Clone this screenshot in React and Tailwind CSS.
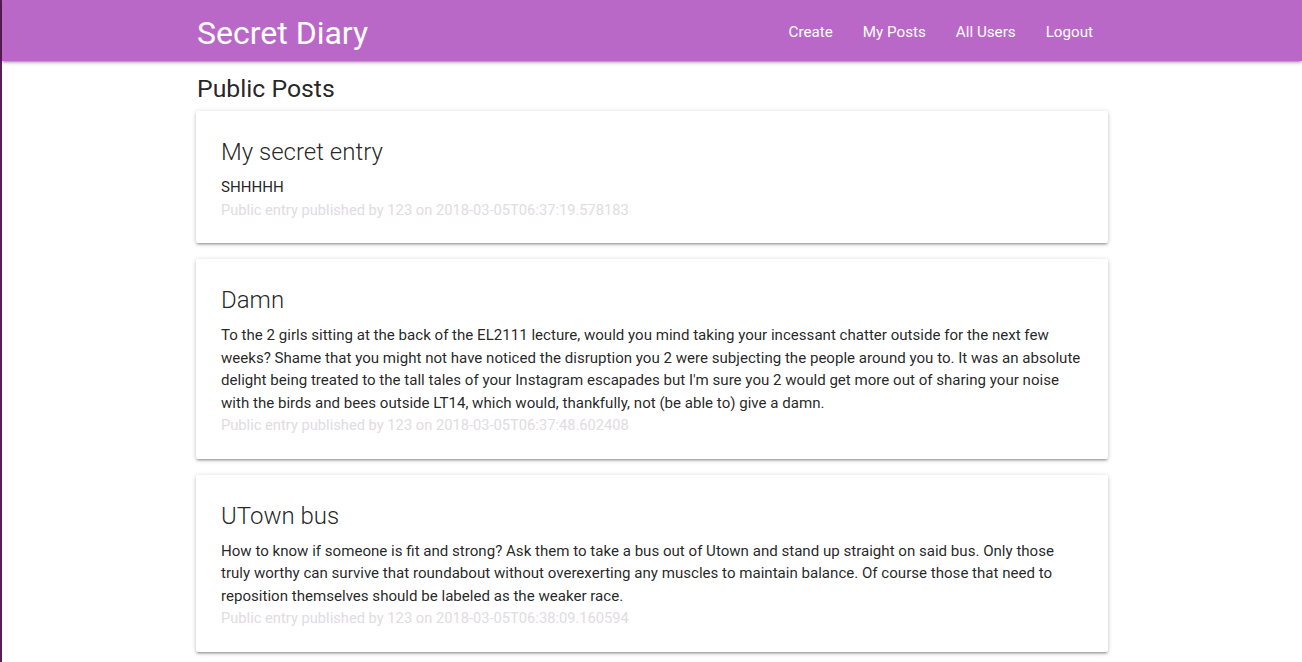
import React from "react";

const posts = [
  {
    title: "My secret entry",
    body: "SHHHHH",
    meta: "Public entry published by 123 on 2018-03-05T06:37:19.578183",
  },
  {
    title: "Damn",
    body: "To the 2 girls sitting at the back of the EL2111 lecture, would you mind taking your incessant chatter outside for the next few weeks? Shame that you might not have noticed the disruption you 2 were subjecting the people around you to. It was an absolute delight being treated to the tall tales of your Instagram escapades but I'm sure you 2 would get more out of sharing your noise with the birds and bees outside LT14, which would, thankfully, not (be able to) give a damn.",
    meta: "Public entry published by 123 on 2018-03-05T06:37:48.602408",
  },
  {
    title: "UTown bus",
    body: "How to know if someone is fit and strong? Ask them to take a bus out of Utown and stand up straight on said bus. Only those truly worthy can survive that roundabout without overexerting any muscles to maintain balance. Of course those that need to reposition themselves should be labeled as the weaker race.",
    meta: "Public entry published by 123 on 2018-03-05T06:38:09.160594",
  },
];

export default function App() {
  return (
    <div
      className="flex h-screen overflow-hidden bg-white text-[15.08px] leading-[22.5px] text-black/[0.87]"
      style={{ fontFamily: "Roboto, 'Noto Sans', sans-serif" }}
    >
      <div className="w-[2px] shrink-0 bg-[#5a1d5a]" />
      <div className="flex-1 min-w-0">
        <nav className="relative z-10 h-[61px] bg-[#ba68c8] pt-[4px] shadow-[0_2px_2px_0_rgba(0,0,0,0.14),0_3px_1px_-2px_rgba(0,0,0,0.12),0_1px_5px_0_rgba(0,0,0,0.2)]">
          <div className="mx-auto flex h-full w-[912px] items-center justify-between">
            <a className="pl-px text-[32px] leading-none text-white">Secret Diary</a>
            <ul className="flex items-center text-[15.2px] text-white">
              <li className="px-[15px]">Create</li>
              <li className="px-[15px]">My Posts</li>
              <li className="px-[15px]">All Users</li>
              <li className="px-[15px]">Logout</li>
            </ul>
          </div>
        </nav>
        <main className="mx-auto w-[912px]">
          <h5 className="mt-[14px] mb-[9px] pl-px text-[24.8px] leading-[27px] font-normal">
            Public Posts
          </h5>
          <div className="flex flex-col gap-[16px]">
            {posts.map((p) => (
              <div
                key={p.title}
                className="rounded-[2px] bg-white pt-[25px] pb-[22px] pl-[25px] pr-[24px] shadow-[0_2px_2px_0_rgba(0,0,0,0.14),0_3px_1px_-2px_rgba(0,0,0,0.12),0_1px_5px_0_rgba(0,0,0,0.2)]"
              >
                <span className="mb-2 block text-[24px] leading-[32px] font-light">
                  {p.title}
                </span>
                <p>{p.body}</p>
                <p className="text-[14.7px] text-[#e0dcdf]">{p.meta}</p>
              </div>
            ))}
          </div>
        </main>
      </div>
    </div>
  );
}
